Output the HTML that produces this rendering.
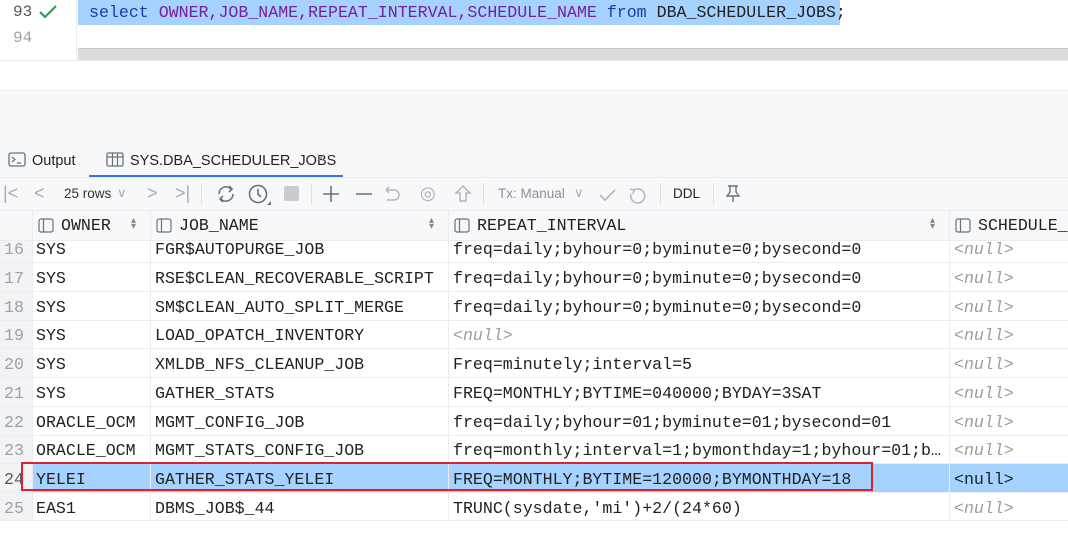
<!DOCTYPE html>
<html><head><meta charset="utf-8"><style>
*{margin:0;padding:0;box-sizing:border-box}
body{width:1068px;height:533px;overflow:hidden;background:#fff;position:relative;font-family:"Liberation Sans",sans-serif}
.a{position:absolute;white-space:pre}
.mono{font-family:"Liberation Mono","DejaVu Sans Mono",monospace}
.ln{color:#9da0a8;font-size:16px}
.row{position:absolute;left:0;width:1068px;height:29px;border-bottom:1px solid #ebecf0}
.row span{position:absolute;top:6px;font-family:"Liberation Mono",monospace;font-size:16.6px;color:#222}
.row .n{left:4px;color:#9da0a8;width:28px}
.row .c1{left:36px}.row .c2{left:155px}.row .c3{left:453px}.row .c4{left:954px}
.null{color:#9a9da4!important;font-style:italic}
.tb{color:#a8abb2;font-size:18px}
.hd{z-index:2}
</style></head><body>
<!-- editor -->
<div class="a" style="left:78px;top:0;width:762px;height:25px;background:#a6d2ff"></div>
<div class="a ln mono" style="left:13px;top:3px;color:#555">93</div>
<svg class="a" style="left:38px;top:4px" width="20" height="16"><path d="M2 8l5 5 11-11" stroke="#3a9a5b" stroke-width="2.2" fill="none"/></svg>
<div class="a mono" style="left:89px;top:3px;font-size:16.6px;color:#7a1f9a"><span style="color:#1f3aa8">select</span> OWNER,JOB_NAME,REPEAT_INTERVAL,SCHEDULE_NAME <span style="color:#1f3aa8">from</span> <span style="color:#222">DBA_SCHEDULER_JOBS;</span></div>
<div class="a ln mono" style="left:13px;top:29px">94</div>
<div class="a" style="left:76px;top:0;width:1px;height:60px;background:#ebecf0"></div>
<div class="a" style="left:78px;top:48px;width:990px;height:12px;background:#dcdcdc;border-top:1px solid #c8c8c8"></div>
<div class="a" style="left:0;top:60px;width:1068px;height:1px;background:#ebecf0"></div>
<div class="a" style="left:0;top:90px;width:1068px;height:1px;background:#ebecf0"></div>
<div class="a" style="left:0;top:91px;width:1068px;height:119px;background:#f7f8fa"></div>
<!-- tabs -->
<svg class="a" style="left:8px;top:152px" width="18" height="16"><rect x="1" y="1" width="16" height="13" rx="2" fill="none" stroke="#6c707e" stroke-width="1.3"/><path d="M4 5l3 2.5-3 2.5M9 11h4" stroke="#6c707e" stroke-width="1.2" fill="none"/></svg>
<div class="a" style="left:32px;top:153px;font-size:14.5px;color:#222">Output</div>
<svg class="a" style="left:106px;top:152px" width="18" height="16"><rect x="1" y="1" width="16" height="13" rx="1.5" fill="none" stroke="#6c707e" stroke-width="1.3"/><path d="M1 5h16M6.5 1v13M11.5 1v13" stroke="#6c707e" stroke-width="1.2"/></svg>
<div class="a" style="left:130px;top:153px;font-size:14.5px;color:#222">SYS.DBA_SCHEDULER_JOBS</div>
<div class="a" style="left:316px;top:150px;font-size:16px;color:#999">×</div>
<div class="a" style="left:89px;top:175px;width:254px;height:3px;background:#3574f0"></div>
<div class="a" style="left:0;top:177px;width:1068px;height:1px;background:#ebecf0"></div>
<!-- toolbar -->
<div class="a tb" style="left:3px;top:183px">|&lt;</div>
<div class="a tb" style="left:34px;top:183px">&lt;</div>
<div class="a" style="left:64px;top:186px;font-size:13.5px;color:#333">25 rows</div>
<div class="a tb" style="left:117px;top:185px;font-size:13px">∨</div>
<div class="a tb" style="left:147px;top:183px">&gt;</div>
<div class="a tb" style="left:175px;top:183px">&gt;|</div>
<div class="a" style="left:201px;top:183px;width:1px;height:22px;background:#dfe1e5"></div>
<svg class="a" style="left:215px;top:184px" width="22" height="20"><path d="M4 10a7 7 0 0 1 12-5M18 10a7 7 0 0 1-12 5M14 2l3 3-3 3M8 18l-3-3 3-3" stroke="#6c707e" stroke-width="1.6" fill="none"/></svg>
<svg class="a" style="left:247px;top:183px" width="24" height="22"><circle cx="11" cy="11" r="8.5" stroke="#6c707e" stroke-width="1.6" fill="none"/><path d="M11 6v5l3 3" stroke="#6c707e" stroke-width="1.6" fill="none"/><path d="M24 22h-4l4-4z" fill="#6c707e"/></svg>
<div class="a" style="left:284px;top:186px;width:15px;height:15px;background:#c9cbd0;border-radius:2px"></div>
<div class="a" style="left:311px;top:183px;width:1px;height:22px;background:#dfe1e5"></div>
<svg class="a" style="left:320px;top:184px" width="80" height="20"><path d="M3 10h16M11 2v16M36 10h16" stroke="#6c707e" stroke-width="1.6"/><path d="M66 6h8a5 5 0 0 1 0 10h-7M66 6l3-3M66 6l3 3" stroke="#b4b6bc" stroke-width="1.5" fill="none"/></svg>
<div class="a tb" style="left:420px;top:183px">◎</div>
<svg class="a" style="left:453px;top:184px" width="20" height="20"><path d="M10 2l7 7h-4v8H7V9H3z" stroke="#b4b6bc" stroke-width="1.5" fill="none"/></svg>
<div class="a" style="left:483px;top:183px;width:1px;height:22px;background:#dfe1e5"></div>
<div class="a" style="left:498px;top:186px;font-size:13.5px;color:#8c8f96">Tx: Manual</div>
<div class="a tb" style="left:574px;top:185px;font-size:13px">∨</div>
<svg class="a" style="left:598px;top:186px" width="60" height="18"><path d="M2 9l5 5 10-10" stroke="#b4b6bc" stroke-width="1.6" fill="none"/><path d="M36 4a7 7 0 1 1-3 4M36 4l-4-1M36 4l-1 4" stroke="#b4b6bc" stroke-width="1.5" fill="none"/></svg>
<div class="a" style="left:660px;top:183px;width:1px;height:22px;background:#dfe1e5"></div>
<div class="a" style="left:673px;top:186px;font-size:13.5px;color:#222">DDL</div>
<div class="a" style="left:713px;top:183px;width:1px;height:22px;background:#dfe1e5"></div>
<svg class="a" style="left:724px;top:184px" width="18" height="20"><path d="M4 2h10M6 2v6l-3 4h12l-3-4V2M9 12v6" stroke="#6c707e" stroke-width="1.4" fill="none"/></svg>
<!-- gutter -->
<div class="a" style="left:0;top:240px;width:32px;height:280px;background:#f2f3f5"></div>
<!-- rows -->
<div class="row" style="top:234px"><span class="n">16</span><span class="c1">SYS</span><span class="c2">FGR$AUTOPURGE_JOB</span><span class="c3">freq=daily;byhour=0;byminute=0;bysecond=0</span><span class="c4 null">&lt;null&gt;</span></div>
<div class="row" style="top:263px"><span class="n">17</span><span class="c1">SYS</span><span class="c2">RSE$CLEAN_RECOVERABLE_SCRIPT</span><span class="c3">freq=daily;byhour=0;byminute=0;bysecond=0</span><span class="c4 null">&lt;null&gt;</span></div>
<div class="row" style="top:292px"><span class="n">18</span><span class="c1">SYS</span><span class="c2">SM$CLEAN_AUTO_SPLIT_MERGE</span><span class="c3">freq=daily;byhour=0;byminute=0;bysecond=0</span><span class="c4 null">&lt;null&gt;</span></div>
<div class="row" style="top:320px"><span class="n">19</span><span class="c1">SYS</span><span class="c2">LOAD_OPATCH_INVENTORY</span><span class="c3 null">&lt;null&gt;</span><span class="c4 null">&lt;null&gt;</span></div>
<div class="row" style="top:349px"><span class="n">20</span><span class="c1">SYS</span><span class="c2">XMLDB_NFS_CLEANUP_JOB</span><span class="c3">Freq=minutely;interval=5</span><span class="c4 null">&lt;null&gt;</span></div>
<div class="row" style="top:378px"><span class="n">21</span><span class="c1">SYS</span><span class="c2">GATHER_STATS</span><span class="c3">FREQ=MONTHLY;BYTIME=040000;BYDAY=3SAT</span><span class="c4 null">&lt;null&gt;</span></div>
<div class="row" style="top:407px"><span class="n">22</span><span class="c1">ORACLE_OCM</span><span class="c2">MGMT_CONFIG_JOB</span><span class="c3">freq=daily;byhour=01;byminute=01;bysecond=01</span><span class="c4 null">&lt;null&gt;</span></div>
<div class="row" style="top:435px"><span class="n">23</span><span class="c1">ORACLE_OCM</span><span class="c2">MGMT_STATS_CONFIG_JOB</span><span class="c3">freq=monthly;interval=1;bymonthday=1;byhour=01;b…</span><span class="c4 null">&lt;null&gt;</span></div>
<div class="a" style="left:33px;top:464px;width:1035px;height:28px;background:#a6d2ff"></div>
<div class="row" style="top:464px;border:none"><span class="n" style="color:#555">24</span><span class="c1">YELEI</span><span class="c2">GATHER_STATS_YELEI</span><span class="c3">FREQ=MONTHLY;BYTIME=120000;BYMONTHDAY=18</span><span class="c4" style="color:#222">&lt;null&gt;</span></div>
<div class="row" style="top:492px;border-top:1px solid #ebecf0"><span class="n">25</span><span class="c1">EAS1</span><span class="c2">DBMS_JOB$_44</span><span class="c3">TRUNC(sysdate,'mi')+2/(24*60)</span><span class="c4 null">&lt;null&gt;</span></div>
<!-- column lines -->
<div class="a" style="left:32px;top:210px;width:1px;height:310px;background:#ebecf0"></div>
<div class="a" style="left:150px;top:210px;width:1px;height:310px;background:#ebecf0"></div>
<div class="a" style="left:448px;top:210px;width:1px;height:310px;background:#ebecf0"></div>
<div class="a" style="left:949px;top:210px;width:1px;height:310px;background:#ebecf0"></div>
<!-- header -->
<div class="a hd" style="left:0;top:210px;width:1068px;height:31px;background:#f7f8fa;border-top:1px solid #ebecf0;border-bottom:1px solid #ebecf0"></div>
<div class="a hd" style="left:32px;top:210px;width:1px;height:31px;background:#ebecf0"></div>
<div class="a hd" style="left:150px;top:210px;width:1px;height:31px;background:#ebecf0"></div>
<div class="a hd" style="left:448px;top:210px;width:1px;height:31px;background:#ebecf0"></div>
<div class="a hd" style="left:949px;top:210px;width:1px;height:31px;background:#ebecf0"></div>
<svg class="a hd" style="left:38px;top:218px" width="16" height="16"><rect x="1" y="1" width="14" height="13" rx="2" fill="none" stroke="#6c707e" stroke-width="1.2"/><path d="M5.5 1v13" stroke="#6c707e" stroke-width="1.2"/></svg>
<svg class="a hd" style="left:156px;top:218px" width="16" height="16"><rect x="1" y="1" width="14" height="13" rx="2" fill="none" stroke="#6c707e" stroke-width="1.2"/><path d="M5.5 1v13" stroke="#6c707e" stroke-width="1.2"/></svg>
<svg class="a hd" style="left:454px;top:218px" width="16" height="16"><rect x="1" y="1" width="14" height="13" rx="2" fill="none" stroke="#6c707e" stroke-width="1.2"/><path d="M5.5 1v13" stroke="#6c707e" stroke-width="1.2"/></svg>
<svg class="a hd" style="left:955px;top:218px" width="16" height="16"><rect x="1" y="1" width="14" height="13" rx="2" fill="none" stroke="#6c707e" stroke-width="1.2"/><path d="M5.5 1v13" stroke="#6c707e" stroke-width="1.2"/></svg>
<div class="a mono hd" style="left:61px;top:216px;font-size:16.6px;color:#222">OWNER</div>
<div class="a mono hd" style="left:179px;top:216px;font-size:16.6px;color:#222">JOB_NAME</div>
<div class="a mono hd" style="left:477px;top:216px;font-size:16.6px;color:#222">REPEAT_INTERVAL</div>
<div class="a mono hd" style="left:978px;top:216px;font-size:16.6px;color:#222">SCHEDULE_</div>
<div class="a hd" style="left:131px;top:218px;font-size:10px;color:#888;line-height:6px">▴<br>▾</div>
<div class="a hd" style="left:429px;top:218px;font-size:10px;color:#888;line-height:6px">▴<br>▾</div>
<div class="a hd" style="left:930px;top:218px;font-size:10px;color:#888;line-height:6px">▴<br>▾</div>
<div class="a" style="left:21px;top:462px;width:852px;height:29px;border:2px solid #e0202a;z-index:3"></div>
</body></html>
